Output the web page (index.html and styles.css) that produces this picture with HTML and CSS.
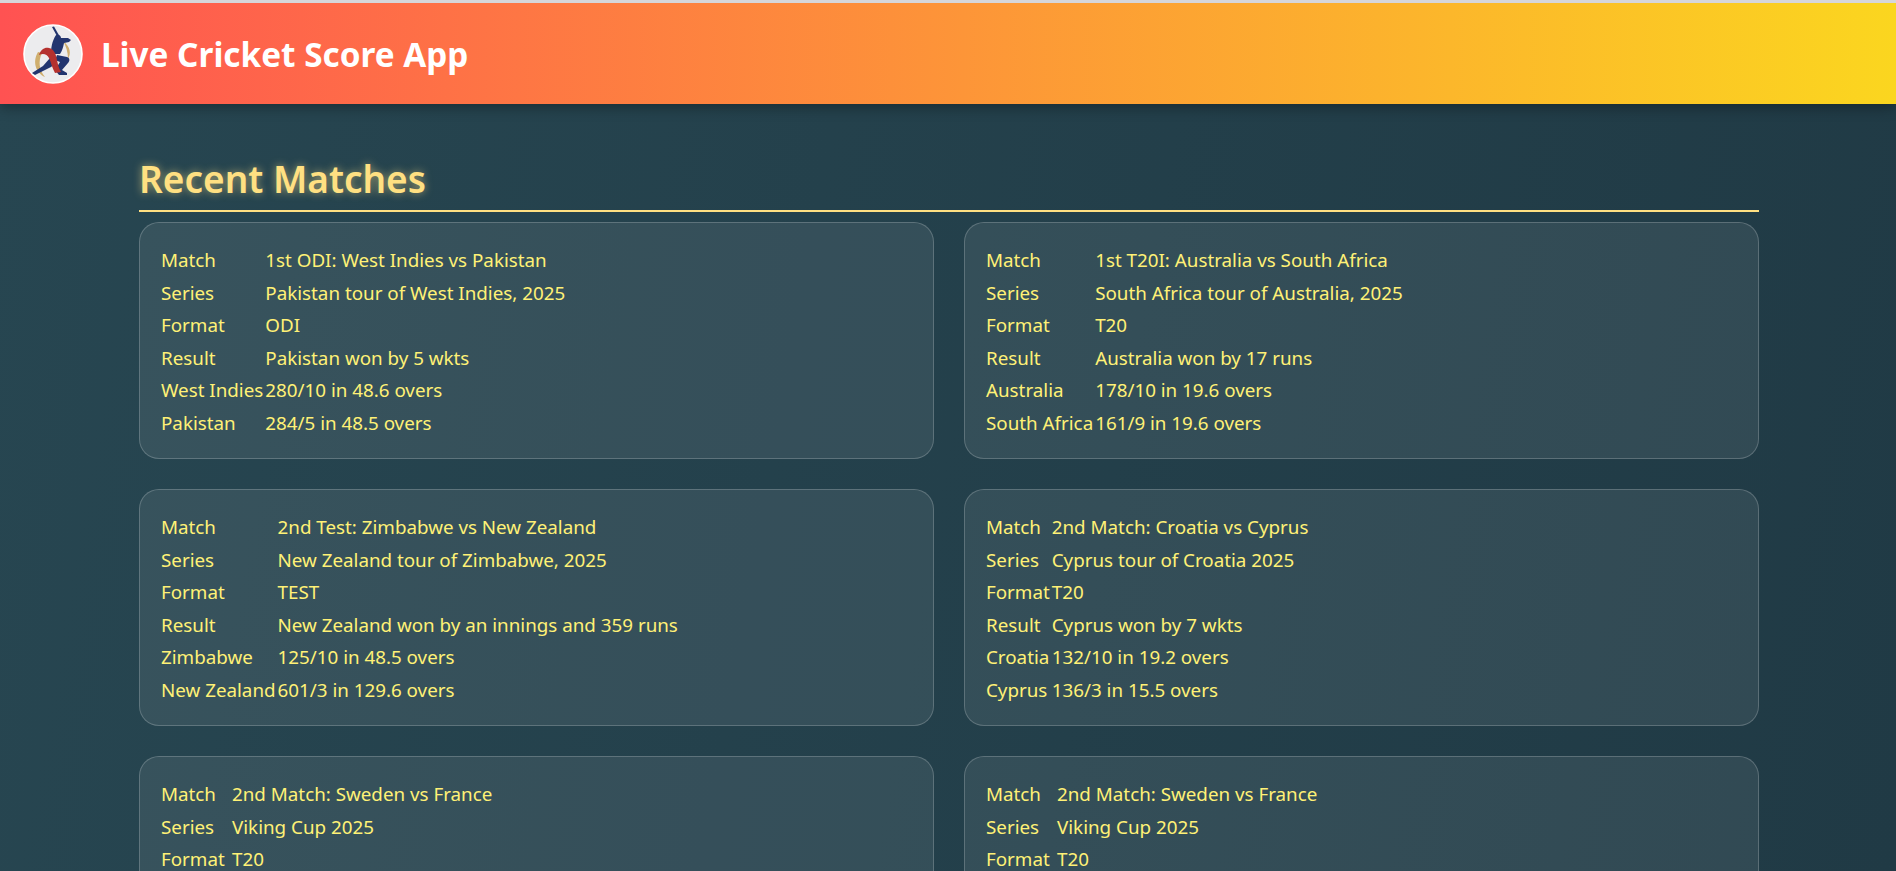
FILE: index.html
```html
<!DOCTYPE html>
<html lang="en">
<head>
    <meta charset="UTF-8">
    <meta name="viewport" content="width=device-width, initial-scale=1.0">
    <title>Live Cricket Score App</title>
    <link rel="stylesheet" href="styles.css">
</head>
<body>

    <header class="app-header">
        <svg class="logo" viewBox="0 0 60 60" role="img" aria-label="Cricket logo">
            <circle cx="30" cy="30" r="29" fill="#ececee" stroke="#ffffff" stroke-width="1.6"/>
            <!-- gold crescent -->
            <path d="M15 28 C9 38 13 49 22 53 C16 46 15 37 19 29 Z" fill="#cfae6e"/>
            <path d="M40 17 C48 23 48 30 45 35 C45 28 43 22 40 17 Z" fill="#cfae6e"/>
            <!-- batsman -->
            <path d="M29 3 L31 2.5 L37 13 L35 14 Z" fill="#22356f"/>
            <path d="M33 11 C36 10 38 12 38 14 L45 14 L48 16 L46 18 L41 19 C40 24 39 27 37 30 L28 30 C28 24 29 17 33 11 Z" fill="#22356f"/>
            <path d="M27 34 L34 38 L28 43 L12 51 L9 49 L20 42 Z" fill="#22356f"/>
            <path d="M34 31 L44 33 C47 34 47 37 45 39 L39 46 L44 49 L44 51 L36 51 L32 46 L37 38 L32 36 Z" fill="#22356f"/>
            <!-- red sash -->
            <path d="M16 31 C18 25 22 23 26 24 C31 25 33 30 34 36 C35 41 36 45 38 48 L32 49 C29 44 28 38 26 34 C24 30 20 29 16 31 Z" fill="#b5312f"/>
        </svg>
        <h1 class="app-title">Live Cricket Score App</h1>
    </header>

    <main class="container">
        <h2 class="section-title">Recent Matches</h2>

        <div class="match-grid">
            <section class="match-card">
                <table class="match-table">
                    <tr><td>Match</td><td>1st ODI: West Indies vs Pakistan</td></tr>
                    <tr><td>Series</td><td>Pakistan tour of West Indies, 2025</td></tr>
                    <tr><td>Format</td><td>ODI</td></tr>
                    <tr><td>Result</td><td>Pakistan won by 5 wkts</td></tr>
                    <tr><td>West Indies</td><td>280/10 in 48.6 overs</td></tr>
                    <tr><td>Pakistan</td><td>284/5 in 48.5 overs</td></tr>
                </table>
            </section>

            <section class="match-card">
                <table class="match-table">
                    <tr><td>Match</td><td>1st T20I: Australia vs South Africa</td></tr>
                    <tr><td>Series</td><td>South Africa tour of Australia, 2025</td></tr>
                    <tr><td>Format</td><td>T20</td></tr>
                    <tr><td>Result</td><td>Australia won by 17 runs</td></tr>
                    <tr><td>Australia</td><td>178/10 in 19.6 overs</td></tr>
                    <tr><td>South Africa</td><td>161/9 in 19.6 overs</td></tr>
                </table>
            </section>

            <section class="match-card">
                <table class="match-table">
                    <tr><td>Match</td><td>2nd Test: Zimbabwe vs New Zealand</td></tr>
                    <tr><td>Series</td><td>New Zealand tour of Zimbabwe, 2025</td></tr>
                    <tr><td>Format</td><td>TEST</td></tr>
                    <tr><td>Result</td><td>New Zealand won by an innings and 359 runs</td></tr>
                    <tr><td>Zimbabwe</td><td>125/10 in 48.5 overs</td></tr>
                    <tr><td>New Zealand</td><td>601/3 in 129.6 overs</td></tr>
                </table>
            </section>

            <section class="match-card">
                <table class="match-table">
                    <tr><td>Match</td><td>2nd Match: Croatia vs Cyprus</td></tr>
                    <tr><td>Series</td><td>Cyprus tour of Croatia 2025</td></tr>
                    <tr><td>Format</td><td>T20</td></tr>
                    <tr><td>Result</td><td>Cyprus won by 7 wkts</td></tr>
                    <tr><td>Croatia</td><td>132/10 in 19.2 overs</td></tr>
                    <tr><td>Cyprus</td><td>136/3 in 15.5 overs</td></tr>
                </table>
            </section>

            <section class="match-card">
                <table class="match-table match-table-wide">
                    <tr><td>Match</td><td>2nd Match: Sweden vs France</td></tr>
                    <tr><td>Series</td><td>Viking Cup 2025</td></tr>
                    <tr><td>Format</td><td>T20</td></tr>
                </table>
            </section>

            <section class="match-card">
                <table class="match-table match-table-wide">
                    <tr><td>Match</td><td>2nd Match: Sweden vs France</td></tr>
                    <tr><td>Series</td><td>Viking Cup 2025</td></tr>
                    <tr><td>Format</td><td>T20</td></tr>
                </table>
            </section>
        </div>
    </main>

</body>
</html>
```

FILE: styles.css
```css
/* Global Styles */
html, body {
    height: 100%;
    overflow: hidden;
}

body {
    margin: 0;
    padding: 0;
    font-family: "Noto Sans", "Open Sans", sans-serif;
    color: #fff176;
    background: linear-gradient(100deg, #274651 0%, #203a45 100%);
    border-top: 3px solid #d6d6da;
    box-sizing: border-box;
}

/* Header Styles */
.app-header {
    display: flex;
    align-items: center;
    gap: 18px;
    height: 101px;
    padding: 0 23px;
    background: linear-gradient(to right, #ff5252, #fbd61f);
    box-shadow: 0 4px 12px rgba(0, 0, 0, 0.3);
}

.logo {
    width: 60px;
    height: 60px;
}

.app-title {
    margin: 0;
    color: #fff;
    font-size: 33.3px;
    font-weight: 700;
}

/* Recent Matches */
.container {
    width: 1620px;
    margin-left: 139px;
    padding-top: 51px;
}

.section-title {
    margin: 0 0 10px;
    padding-bottom: 7px;
    font-size: 37px;
    font-weight: 600;
    line-height: 48px;
    color: #ffe082;
    border-bottom: 2px solid #ffe082;
    text-shadow: 0 0 8px rgba(255, 224, 130, 0.6);
}

.match-grid {
    display: grid;
    grid-template-columns: 1fr 1fr;
    gap: 30px;
}

.match-card {
    padding: 21px 20px 19px 21px;
    background-color: rgba(255, 255, 255, 0.08);
    border: 1px solid rgba(255, 255, 255, 0.2);
    border-radius: 20px;
}

.match-table {
    border-collapse: collapse;
    font-size: 18.8px;
}

.match-table td {
    height: 32.5px;
    padding: 0;
    white-space: nowrap;
}

.match-table td:first-child {
    padding-right: 2px;
}

.match-table-wide td:first-child {
    min-width: 69px;
}
```
